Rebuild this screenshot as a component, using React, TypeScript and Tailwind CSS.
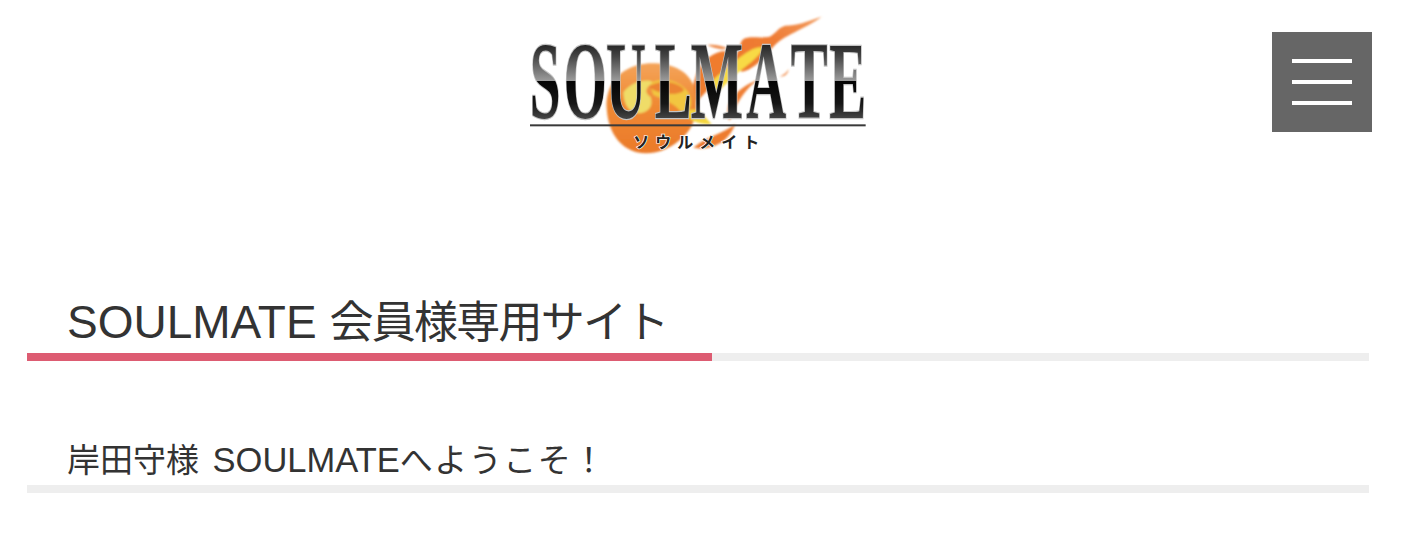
import React from 'react';

const SANS = 'font-["Liberation_Sans","Noto_Sans_CJK_JP",sans-serif]';

const Logo: React.FC = () => (
  <svg viewBox="0 0 1068 480" className="block w-[356px] h-[160px]">
    <defs>
      <linearGradient id="chrome" gradientUnits="userSpaceOnUse" x1="0" y1="120" x2="0" y2="340">
        <stop offset="0" stopColor="#262626" />
        <stop offset="0.15" stopColor="#444444" />
        <stop offset="0.49" stopColor="#9c9c9c" />
        <stop offset="0.495" stopColor="#040404" />
        <stop offset="0.8" stopColor="#161616" />
        <stop offset="1" stopColor="#444444" />
      </linearGradient>
      <linearGradient id="ball" x1="0" y1="0" x2="0" y2="1">
        <stop offset="0" stopColor="#f4a45a" />
        <stop offset="0.45" stopColor="#f08a34" />
        <stop offset="1" stopColor="#ea7a2a" />
      </linearGradient>
      <linearGradient id="tail" x1="1" y1="0" x2="0" y2="1">
        <stop offset="0" stopColor="#f29a5c" />
        <stop offset="0.5" stopColor="#ef7b34" />
        <stop offset="1" stopColor="#ee7a2c" />
      </linearGradient>
      <filter id="soft">
        <feGaussianBlur stdDeviation="2.5" />
      </filter>
    </defs>

    <g filter="url(#soft)">
      {/* fire ball */}
      <path
        d="M260 310 C255 240 300 185 375 176 C440 170 500 190 520 240 C540 300 530 360 490 395 C450 435 400 452 350 442 C300 428 265 385 260 310 Z"
        fill="url(#ball)"
      />
      <path d="M310 262 C335 228 385 220 400 232 C375 250 372 262 392 276 C400 300 390 320 360 325 C335 325 312 310 310 262 Z" fill="#efdc68" />
      <path d="M395 232 C430 215 480 225 505 262 C520 290 515 320 490 330 C470 300 440 285 400 270 C395 255 390 245 395 232 Z" fill="#f2c640" />
      <path d="M385 246 C415 224 470 226 492 254 C485 270 430 275 385 246 Z" fill="#ec8431" />
      <path d="M495 320 C530 300 550 330 575 358 C540 358 505 350 495 320 Z" fill="#f4d53c" />
      <path d="M520 428 C560 395 610 385 645 358 C630 405 580 440 520 428 Z" fill="#ee7b2d" />

      {/* flame tail */}
      <path
        d="M905 35 C860 50 830 62 795 62 C770 70 765 90 745 96 C710 100 685 92 668 104 C660 112 662 125 655 135 C640 165 645 175 665 200 C700 195 730 160 760 125 C790 90 850 75 905 35 Z"
        fill="url(#tail)"
      />
      <path d="M562 120 C585 118 605 122 622 130 C605 136 585 130 562 120 Z" fill="#ee8a4a" />
      <path d="M520 240 C530 200 540 160 600 140 C625 136 640 145 630 175 C600 215 570 250 530 290 Z" fill="#ef7b2e" />
      <path d="M560 250 C590 205 625 190 650 165 C680 140 710 122 730 128 C715 160 680 180 640 215 L590 265 Z" fill="#f8da45" />
      <path d="M625 300 C650 250 690 235 722 220 C690 240 660 270 630 345 C625 350 620 320 625 300 Z" fill="#ef7f36" />
      <path d="M780 215 C795 208 802 200 806 192 C804 206 795 215 780 215 Z" fill="#ef7f36" />
    </g>

    {/* wordmark */}
    <text
      transform="scale(0.5 1)"
      x="58 262 516 808 1024 1358 1624 1856"
      y="340"
      fontFamily="'Liberation Serif', serif"
      fontWeight="700"
      fontSize="332"
      fill="url(#chrome)"
      stroke="#c4c4c4"
      strokeWidth="7"
      paintOrder="stroke"
    >
      SOULMATE
    </text>

    <rect x="30" y="358" width="1007" height="6" fill="#3a3a3a" />

    <text
      x="340"
      y="428"
      fontFamily="'Noto Sans CJK JP', sans-serif"
      fontWeight="700"
      fontSize="48"
      letterSpacing="18"
      fill="#222222"
      stroke="#ffffff"
      strokeWidth="4"
      paintOrder="stroke"
    >
      ソウルメイト
    </text>
  </svg>
);

const Header: React.FC = () => (
  <header className="grid grid-cols-[1fr_356px_1fr] pl-6 pr-8 h-[164px]">
    <div />
    <div className="pt-[5px]">
      <Logo />
    </div>
    <button className="justify-self-end mt-8 w-[100px] h-[100px] bg-[#666666] flex flex-col items-center justify-center gap-[17px]">
      <span className="block w-[60px] h-1 bg-white" />
      <span className="block w-[60px] h-1 bg-white" />
      <span className="block w-[60px] h-1 bg-white" />
    </button>
  </header>
);

export default function App() {
  return (
    <div className={`${SANS} bg-white text-[#333333] h-[560px] overflow-hidden`}>
      <Header />
      <main className="ml-[27px] mr-[35px]">
        <section className="pt-[129px]">
          <h1 className="pl-10 h-[60px] text-[46px] leading-[58px]">
            SOULMATE <span className="text-[44px] tracking-[-1.75px]">会員様専用サイト</span>
          </h1>
          <div className="flex h-2">
            <div className="w-[685px] bg-[#dd5c72]" />
            <div className="flex-1 bg-[#eeeeee]" />
          </div>
        </section>
        <section className="pt-[74px]">
          <h2 className="pl-10 h-[50px] text-[34.5px] leading-[50px]">
            <span className="text-[33px] mr-1">岸田守様</span> SOULMATE
            <span className="text-[33px] tracking-[1.5px]">へようこそ！</span>
          </h2>
          <div className="h-2 bg-[#eeeeee]" />
        </section>
      </main>
    </div>
  );
}
